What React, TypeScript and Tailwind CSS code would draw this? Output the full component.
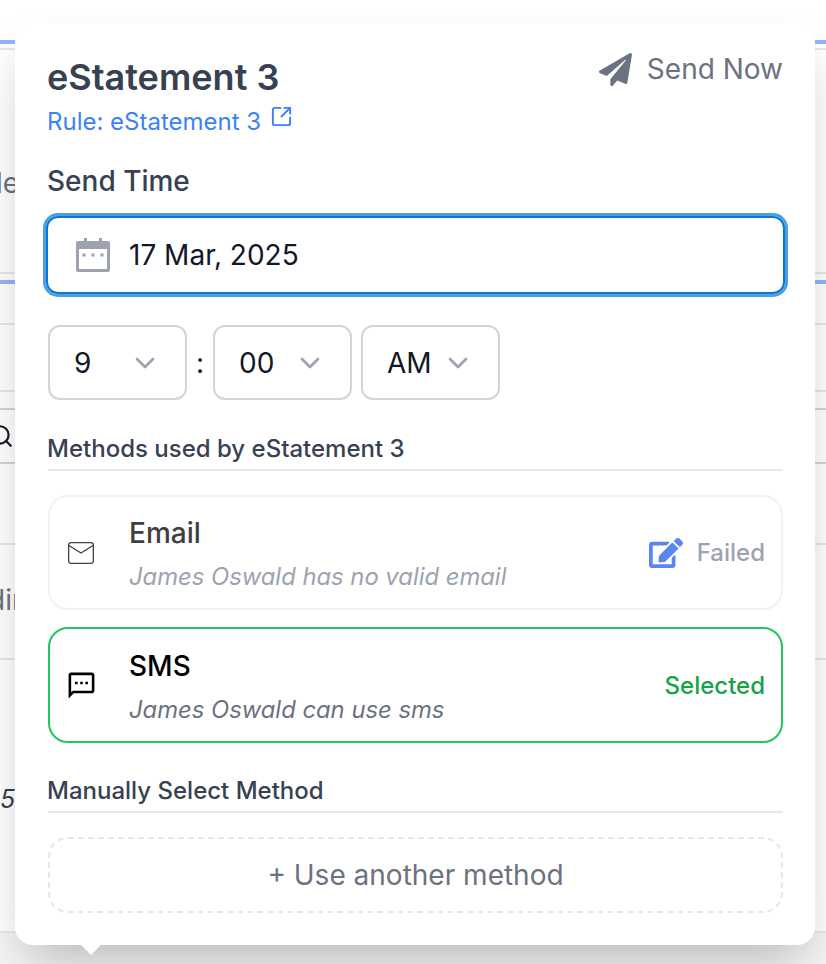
import { ChevronDown, Search, SquareArrowOutUpRight } from "lucide-react";
import { FaEdit, FaPaperPlane } from "react-icons/fa";
import { MdOutlineSms } from "react-icons/md";

function CalendarIcon() {
  return (
    <svg width="34" height="34" viewBox="0 0 34 34" className="shrink-0">
      <path
        fill="#9ca3af"
        d="M8 0h3v3h12V0h3v3h6a2 2 0 0 1 2 2v27a2 2 0 0 1-2 2H2a2 2 0 0 1-2-2V5a2 2 0 0 1 2-2h6V0ZM3 11v20h28V11H3Z"
      />
      <rect x="6.5" y="15.5" width="3" height="3" fill="#9ca3af" />
      <rect x="15.5" y="15.5" width="3" height="3" fill="#9ca3af" />
      <rect x="24.5" y="15.5" width="3" height="3" fill="#9ca3af" />
    </svg>
  );
}

function EnvelopeIcon() {
  return (
    <svg width="26" height="22" viewBox="0 0 26 22" fill="none" stroke="#404040" strokeWidth="1.3" className="shrink-0">
      <rect x="0.65" y="0.65" width="24.7" height="20.7" rx="2.5" />
      <path d="M1 3.5 13 11 25 3.5" />
    </svg>
  );
}

function TimeSelect({ value }: { value: string }) {
  return (
    <div className="flex h-[75px] w-[139px] items-center justify-between rounded-xl border-2 border-[#d1d5db] pl-[24px] pr-[24px] text-[28px] text-[#111827]">
      <span>{value}</span>
      <ChevronDown className="size-[32px] text-[#9ca3af]" strokeWidth={2} />
    </div>
  );
}

function SectionHeading({ children, className }: { children: string; className: string }) {
  return (
    <div className={`border-b-2 border-[#e5e7eb] text-[24px] font-medium leading-[32px] text-[#374151] ${className}`}>
      <div className="ml-[-1px]">{children}</div>
    </div>
  );
}

function BackgroundRows() {
  return (
    <div className="flex flex-col">
      <div className="h-[40px]" />
      <div className="h-[4px] bg-[#93b5f7]" />
      <div className="h-[4px]" />
      <div className="flex h-[226px] items-center justify-end border-y-2 border-[#e5e7eb] pt-[44px] text-[28px] text-[#6b7280]">
        <span className="pr-[807px]">le</span>
      </div>
      <div className="h-[6px]" />
      <div className="h-[4px] bg-[#93b5f7]" />
      <div className="h-[41px] border-b-2 border-[#e5e7eb]" />
      <div className="h-[67px] border-b-2 border-[#e5e7eb]" />
      <div className="h-[16px]" />
      <div className="flex h-[56px] items-center border-y-2 border-[#d1d5db]">
        <Search className="ml-[-12px] size-[26px] text-[#111827]" strokeWidth={2} />
      </div>
      <div className="h-[81px] border-b-2 border-[#e5e7eb]" />
      <div className="flex h-[115px] items-center border-b-2 border-[#e5e7eb] pb-[4px] text-[28px] text-[#6b7280]">
        <span className="ml-[-12px]">din</span>
      </div>
      <div className="flex h-[273px] items-center border-b-2 border-[#e5e7eb] pt-[8px] text-[25px] italic text-[#374151]">
        <span>5</span>
      </div>
      <div className="h-[31px] bg-[#f3f4f6]" />
    </div>
  );
}

export default function App() {
  return (
    <div className="relative h-[964px] w-[826px] overflow-hidden bg-white font-['Inter',sans-serif]">
      <BackgroundRows />

      <div className="absolute left-[15px] top-[24px] flex h-[921px] w-[800px] flex-col rounded-[18px] bg-white pl-[33px] pr-[32px] shadow-[0_25px_50px_-12px_rgba(0,0,0,0.25)]">
        <div className="flex items-start justify-between">
          <div className="ml-[-1px] pt-[30px]">
            <div className="text-[36px] font-semibold leading-[46px] text-[#374151]">eStatement 3</div>
            <div className="mt-[5px] flex items-center gap-[9px] text-[24px] leading-[30px] text-[#3b82f6]">
              <span>Rule: eStatement 3</span>
              <SquareArrowOutUpRight className="mb-[10px] size-[23px]" strokeWidth={2} />
            </div>
          </div>
          <div className="flex items-center gap-[15px] pt-[27px] text-[28px] leading-[36px] text-[#6b7280]">
            <FaPaperPlane className="size-[33px]" />
            <span>Send Now</span>
          </div>
        </div>

        <div className="ml-[-1px] mt-[25px] text-[28px] font-medium leading-[36px] text-[#374151]">Send Time</div>

        <div className="mx-[-2px] mt-[17px] flex h-[78px] items-center gap-[19px] rounded-xl border-2 border-[#0b76d6] pl-[28px] text-[28px] text-[#111827] shadow-[0_0_0_3px_#4d9fe0]">
          <CalendarIcon />
          <span>17 Mar, 2025</span>
        </div>

        <div className="mt-[31px] flex items-center">
          <TimeSelect value="9" />
          <span className="w-[26px] text-center text-[28px] text-[#111827]">:</span>
          <TimeSelect value="00" />
          <span className="w-[9px]" />
          <TimeSelect value="AM" />
        </div>

        <SectionHeading className="mt-[33px] pb-[4px]">Methods used by eStatement 3</SectionHeading>

        <div className="mt-[24px] flex h-[115px] items-center rounded-[20px] border-2 border-[#f0f1f3] pl-[18px] pr-[16px]">
          <EnvelopeIcon />
          <div className="ml-[35px] flex-1 pt-[2px]">
            <div className="text-[28px] font-medium leading-[36px] text-[#404040]">Email</div>
            <div className="mt-[10px] text-[23.8px] italic leading-[32px] text-[#9ca3af]">James Oswald has no valid email</div>
          </div>
          <FaEdit className="size-[34px] text-[#5b86f0]" />
          <span className="ml-[14px] text-[24px] font-medium text-[#9ca3af]">Failed</span>
        </div>

        <div className="mt-[17px] flex h-[116px] items-center rounded-[20px] border-2 border-[#22c55e] pl-[16px] pr-[16px]">
          <MdOutlineSms className="size-[31px] shrink-0 text-black" />
          <div className="ml-[32px] flex-1 pt-[4px]">
            <div className="text-[28px] font-medium leading-[36px] text-black">SMS</div>
            <div className="mt-[10px] text-[23.8px] italic leading-[32px] text-[#6b7280]">James Oswald can use sms</div>
          </div>
          <span className="pt-[2px] text-[24px] font-medium text-[#16a34a]">Selected</span>
        </div>

        <SectionHeading className="mt-[32px] pb-[4px]">Manually Select Method</SectionHeading>

        <div className="mt-[24px] flex h-[76px] items-center justify-center rounded-[20px] border-2 border-dashed border-[#e5e7eb] text-[28px] text-[#6b7280]">
          + Use another method
        </div>

        <div className="absolute bottom-[-7px] left-[69px] size-[14px] rotate-45 bg-white" />
      </div>
    </div>
  );
}
